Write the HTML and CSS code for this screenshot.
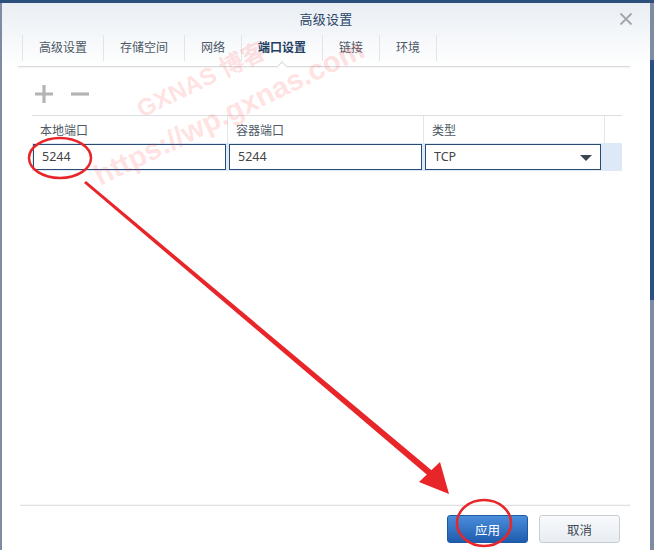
FILE: index.html
```html
<!DOCTYPE html>
<html lang="zh-CN">
<head>
<meta charset="utf-8">
<title>高级设置</title>
<link rel="stylesheet" href="styles.css">
</head>
<body>
<div class="page">
  <div class="dialog">
    <div class="titlebar">
      <span class="title">高级设置</span>
      <svg class="close" width="14" height="14" viewBox="0 0 14 14"><path d="M1.5 1.5 L12.5 12.5 M12.5 1.5 L1.5 12.5" stroke="#a3a7ab" stroke-width="1.8" fill="none"/></svg>
    </div>
    <div class="tabbar">
      <div class="tab">高级设置</div>
      <div class="tab">存储空间</div>
      <div class="tab">网络</div>
      <div class="tab active">端口设置</div>
      <div class="tab">链接</div>
      <div class="tab last">环境</div>
    </div>
    <div class="toolbar">
      <svg class="tool" width="20" height="20" viewBox="0 0 20 20"><path d="M10 1 V19 M1 10 H19" stroke="#b4b4b4" stroke-width="3.2" fill="none"/></svg>
      <svg class="tool" width="20" height="20" viewBox="0 0 20 20"><path d="M1 10 H19" stroke="#b4b4b4" stroke-width="3.2" fill="none"/></svg>
    </div>
    <div class="grid">
      <div class="grid-head">
        <div class="hcell c1">本地端口</div>
        <div class="hcell c2">容器端口</div>
        <div class="hcell c3">类型</div>
        <div class="hcell c4"></div>
      </div>
      <div class="grid-row">
        <div class="cell c1"><div class="input">5244</div></div>
        <div class="cell c2"><div class="input">5244</div></div>
        <div class="cell c3"><div class="input select">TCP<span class="caret"></span></div></div>
        <div class="cell c4"></div>
      </div>
    </div>
    <div class="spacer"></div>
    <div class="footer">
      <button class="btn primary">应用</button>
      <button class="btn">取消</button>
    </div>
  </div>
  <div class="rightedge"></div>
</div>
<svg class="overlay" width="654" height="550" viewBox="0 0 654 550">
  <g fill="rgba(255,70,70,0.18)" font-family="'Liberation Sans','Noto Sans CJK SC',sans-serif" font-weight="bold">
    <text x="142" y="118" font-size="24" transform="rotate(-26 142 118)">GXNAS 博客</text>
    <text x="100" y="186" font-size="29" transform="rotate(-26 100 186)">https://wp.gxnas.com</text>
  </g>
  <ellipse cx="60" cy="158" rx="31" ry="20" fill="none" stroke="#e8262a" stroke-width="2.5"/>
  <ellipse cx="484" cy="523" rx="27" ry="23" fill="none" stroke="#e8262a" stroke-width="2.5"/>
  <polygon points="84,183 86,181 436,474 432,479" fill="#e8262a"/>
  <polygon points="449,494 419,482 440,462" fill="#e8262a"/>
</svg>
</body>
</html>
```
FILE: styles.css
```css
html, body {
  margin: 0;
  padding: 0;
}
body {
  width: 654px;
  height: 550px;
  overflow: hidden;
  background: #7d8ca0;
  font-family: "Noto Sans CJK SC", "Noto Sans", sans-serif;
  position: relative;
}
.page {
  display: flex;
  height: 550px;
  border-top: 3px solid #2c4f7c;
  box-sizing: border-box;
  padding-left: 2px;
}
.dialog {
  width: 648px;
  height: 547px;
  display: flex;
  flex-direction: column;
  background: linear-gradient(#e9eef4 0px, #f7f9fb 40px, #ffffff 64px);
}
.rightedge {
  width: 4px;
  margin-top: 57px;
  height: 240px;
  background: #2b4f82;
}
.titlebar {
  height: 31px;
  display: flex;
  align-items: center;
  justify-content: center;
  position: relative;
}
.title {
  font-size: 13px;
  color: #2a4565;
  letter-spacing: 0.2px;
}
.close {
  position: absolute;
  right: 17px;
  top: 9px;
}
.tabbar {
  display: flex;
  margin: 1px 20px 0 16px;
  padding-left: 4px;
  padding-bottom: 5px;
  border-bottom: 1px solid #d9dcdf;
  box-shadow: 0 1px 1px rgba(0,0,0,0.04);
  position: relative;
}
.tab {
  height: 26px;
  line-height: 24px;
  padding: 0 16px;
  font-size: 12px;
  color: #4c5866;
  border-left: 1px solid #e2e5e8;
  position: relative;
}
.tab.last {
  border-right: 1px solid #e2e5e8;
}
.tab.active {
  color: #1f3e63;
  font-weight: bold;
}
.tab.active::after {
  content: "";
  position: absolute;
  left: 36px;
  bottom: -10px;
  width: 7px;
  height: 7px;
  background: #fff;
  border-left: 1px solid #d9dcdf;
  border-top: 1px solid #d9dcdf;
  transform: rotate(45deg);
}
.toolbar {
  display: flex;
  gap: 16px;
  padding: 17px 0 0 32px;
  height: 31px;
}
.grid {
  margin: 0 28px 0 30px;
  border-top: 1px solid #dcdfe2;
}
.grid-head, .grid-row {
  display: flex;
}
.grid-head {
  height: 27px;
}
.hcell {
  font-size: 12px;
  color: #4d5864;
  line-height: 27px;
  padding-left: 8px;
  box-sizing: border-box;
  border-right: 1px solid #e3e6e9;
}
.c1 { width: 196px; }
.c2 { width: 196px; }
.c3 { width: 181px; }
.c4 { flex: 1; border-right: none; }
.grid-row {
  height: 28px;
  background: #dde9f7;
}
.cell {
  box-sizing: border-box;
  padding: 1px 2px 0 1px;
}
.input {
  height: 26px;
  box-sizing: border-box;
  border: 1px solid #2a4b73;
  background: #fff;
  font-family: "Noto Sans", "Noto Sans CJK SC", sans-serif;
  font-size: 12.5px;
  color: #444;
  line-height: 24px;
  padding-left: 8px;
  position: relative;
}
.c3 .input { margin-right: 2px; }
.caret {
  position: absolute;
  right: 8px;
  top: 10px;
  width: 0;
  height: 0;
  border-left: 6px solid transparent;
  border-right: 6px solid transparent;
  border-top: 6px solid #3d4650;
}
.spacer {
  flex: 1;
}
.footer {
  margin: 0 20px 0 18px;
  border-top: 1px solid #dfe1e3;
  box-shadow: 0 -1px 1px rgba(0,0,0,0.03);
  height: 45px;
  display: flex;
  justify-content: flex-end;
  align-items: flex-start;
  gap: 11px;
  padding: 9px 10px 0 0;
  box-sizing: border-box;
}
.btn {
  width: 81px;
  height: 28px;
  border-radius: 3px;
  font-family: "Noto Sans CJK SC", sans-serif;
  font-size: 12.5px;
  border: 1px solid #c9ced4;
  background: linear-gradient(#f8fafc, #e8edf2);
  color: #3f4954;
  padding: 0;
}
.btn.primary {
  border: 1px solid #1d5aa6;
  background: linear-gradient(#4a8ddb, #1f5cae);
  color: #fff;
}
.overlay {
  position: absolute;
  left: 0;
  top: 0;
  pointer-events: none;
}
```
